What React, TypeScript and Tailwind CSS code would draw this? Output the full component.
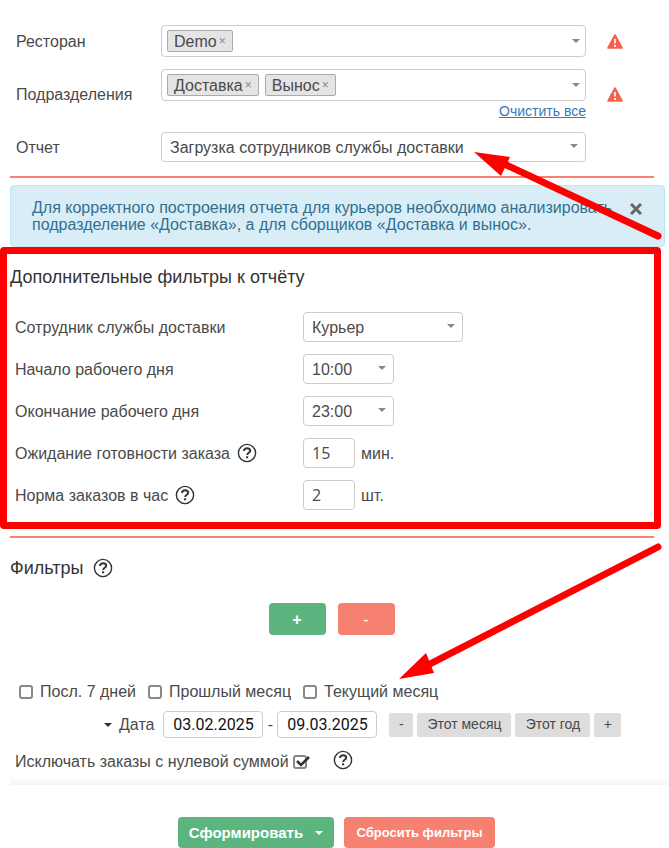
import type { ReactNode, SelectHTMLAttributes } from 'react'

const control = 'rounded-[4px] border border-[#ccc] bg-white'

function Caret({ className = '' }: { className?: string }) {
  return (
    <svg viewBox="0 0 8 4" className={`pointer-events-none h-1 w-2 shrink-0 fill-current ${className}`} aria-hidden="true">
      <path d="M0 0h8L4 4z" />
    </svg>
  )
}

function Help({ label }: { label: string }) {
  return (
    <button type="button" aria-label={label} className="text-[#333]">
      <svg viewBox="0 0 20 20" className="block size-5" fill="none" stroke="currentColor">
        <circle cx="10" cy="10" r="8.6" strokeWidth="1.4" />
        <path d="M7 8.1c0-1.9 1.3-2.9 3.1-2.9s3.1 1 3.1 2.5c0 2.1-3 2-3 4.2" strokeWidth="2" />
        <path d="M10.1 13.3v2" strokeWidth="2.1" />
      </svg>
    </button>
  )
}

function Warning() {
  return (
    <svg viewBox="0 0 16 15" className="block h-[15px] w-4" role="img" aria-label="Внимание">
      <path d="M8 1 15 14H1z" fill="#fb5f4b" stroke="#fb5f4b" strokeWidth="1.6" strokeLinejoin="round" />
      <path d="M8 5v4.6M8 11v2" stroke="#fff" strokeWidth="1.8" />
    </svg>
  )
}

function Select({ className = '', children, ...props }: SelectHTMLAttributes<HTMLSelectElement>) {
  return (
    <div className={`relative ${className}`}>
      <select {...props} className={`${control} block h-[30px] w-full appearance-none pr-6 pl-2`}>
        {children}
      </select>
      <Caret className="absolute top-3 right-2 text-[#888]" />
    </div>
  )
}

function TagBox({ id, tags }: { id: string; tags: string[] }) {
  return (
    <div className={`${control} flex h-8 items-center gap-1.5 px-[5px]`}>
      {tags.map(tag => (
        <span key={tag} className="flex h-[22px] shrink-0 items-center gap-0.5 rounded-[2px] border border-[#aaa] bg-[#e4e4e4] px-1.5">
          {tag}
          <button type="button" aria-label={`Удалить ${tag}`} className="text-xs text-[#888]">×</button>
        </span>
      ))}
      <input id={id} className="min-w-0 flex-1 outline-none" />
      <Caret className="text-[#888]" />
    </div>
  )
}

function Row({ id, label, help, children }: { id: string; label: string; help?: boolean; children: ReactNode }) {
  return (
    <div className="flex h-[30px] items-center">
      <div className="flex w-[288px] shrink-0 items-center gap-[7px]">
        <label htmlFor={id}>{label}</label>
        {help && <Help label={`Справка: ${label}`} />}
      </div>
      {children}
    </div>
  )
}

const periods = ['Посл. 7 дней', 'Прошлый месяц', 'Текущий месяц']
const checkbox = 'size-[14px] shrink-0 appearance-none rounded-[3px] border-2 border-[#888] bg-white'
const numberInput = "mr-1.5 h-[30px] w-[52px] px-2 font-['Open_Sans',sans-serif]"
const dateInput = "h-[27px] w-[100px] text-center font-['Roboto',sans-serif] text-[#111]"
const smallButton = 'h-6 rounded-[2px] bg-[#ddd] text-[14px]'

export default function App() {
  return (
    <main className="relative overflow-hidden bg-white font-['Liberation_Sans',Arial,sans-serif] text-[16px] leading-[17px] text-[#4a4a4a]">
      <form onSubmit={e => e.preventDefault()}>
        <section className="flex flex-col gap-3 pt-[25px] pr-[10px] pl-4">
          <div className="flex items-center">
            <label htmlFor="restaurant" className="w-[145px] shrink-0">Ресторан</label>
            <div className="min-w-0 flex-1"><TagBox id="restaurant" tags={['Demo']} /></div>
            <div className="flex w-[73px] shrink-0 pl-[21px]"><Warning /></div>
          </div>
          <div className="flex items-center">
            <label htmlFor="departments" className="w-[145px] shrink-0">Подразделения</label>
            <div className="flex min-w-0 flex-1 flex-col">
              <TagBox id="departments" tags={['Доставка', 'Вынос']} />
              <a href="#" className="mt-0.5 self-end text-[14px] text-[#337ab7] underline">Очистить все</a>
            </div>
            <div className="flex w-[73px] shrink-0 pl-[21px]"><Warning /></div>
          </div>
          <div className="flex items-center">
            <label htmlFor="report" className="w-[145px] shrink-0">Отчет</label>
            <Select id="report" className="min-w-0 flex-1">
              <option>Загрузка сотрудников службы доставки</option>
            </Select>
            <div className="w-[73px] shrink-0" />
          </div>
        </section>

        <hr className="mt-[14px] mr-[15px] ml-[10px] border-t-2 border-[#f68171]" />

        <div role="alert" className="mt-[7px] mr-1 ml-[10px] flex items-start rounded-[4px] border border-[#bce8f1] bg-[#d9edf7] py-[13px] pr-[22px] pl-[21px] text-[#31708f]">
          <p className="flex-1">
            Для корректного построения отчета для курьеров необходимо анализировать подразделение «Доставка», а для сборщиков «Доставка и вынос».
          </p>
          <button type="button" aria-label="Закрыть" className="mt-1 text-[#666]">
            <svg viewBox="0 0 12 12" className="block size-3" stroke="currentColor" strokeWidth="3">
              <path d="m1 1 10 10M11 1 1 11" />
            </svg>
          </button>
        </div>

        <section className="mr-2 rounded-[4px] border-[7px] border-[#f00] pt-[11px] pb-3">
          <h2 className="pl-[3px] text-lg leading-6 text-[#333]">Дополнительные фильтры к отчёту</h2>
          <div className="mt-[23px] flex flex-col gap-3 pl-2">
            <Row id="employee" label="Сотрудник службы доставки">
              <Select id="employee" className="w-40"><option>Курьер</option></Select>
            </Row>
            <Row id="day-start" label="Начало рабочего дня">
              <Select id="day-start" className="w-[91px]"><option>10:00</option></Select>
            </Row>
            <Row id="day-end" label="Окончание рабочего дня">
              <Select id="day-end" className="w-[91px]"><option>23:00</option></Select>
            </Row>
            <Row id="waiting" label="Ожидание готовности заказа" help>
              <input id="waiting" defaultValue="15" className={`${control} ${numberInput}`} />
              мин.
            </Row>
            <Row id="norm" label="Норма заказов в час" help>
              <input id="norm" defaultValue="2" className={`${control} ${numberInput}`} />
              шт.
            </Row>
          </div>
        </section>

        <hr className="mt-[7px] mr-[15px] ml-[10px] border-t-2 border-[#f68171]" />

        <section className="pt-[18px]">
          <div className="flex items-center gap-2.5 pl-[10px]">
            <h2 className="text-lg leading-6 text-[#333]">Фильтры</h2>
            <Help label="Справка: Фильтры" />
          </div>
          <div className="mt-[23px] flex justify-center gap-3 pr-1.5">
            <button type="button" aria-label="Добавить фильтр" className="h-8 w-[57px] rounded-[4px] bg-[#5cb57f] font-bold text-white">+</button>
            <button type="button" aria-label="Удалить фильтр" className="h-8 w-[57px] rounded-[4px] bg-[#f68171] text-white">-</button>
          </div>
        </section>

        <section className="pt-12">
          <div className="flex items-center gap-3 pl-[19px]">
            {periods.map(period => (
              <label key={period} className="flex items-center gap-[7px]">
                <input type="checkbox" className={checkbox} />
                {period}
              </label>
            ))}
          </div>
          <div className="mt-[11px] flex items-center pl-[104px]">
            <button type="button" className="flex items-center gap-[7px]">
              <Caret className="text-[#333]" />
              Дата
            </button>
            <input aria-label="Дата с" defaultValue="03.02.2025" className={`${control} ${dateInput} ml-[9px]`} />
            <span className="w-[14px] text-center">-</span>
            <input aria-label="Дата по" defaultValue="09.03.2025" className={`${control} ${dateInput}`} />
            <div className="ml-3 flex gap-1">
              <button type="button" aria-label="Предыдущий период" className={`${smallButton} w-6`}>-</button>
              <button type="button" className={`${smallButton} w-[94px]`}>Этот месяц</button>
              <button type="button" className={`${smallButton} w-[75px]`}>Этот год</button>
              <button type="button" aria-label="Следующий период" className={`${smallButton} w-[27px]`}>+</button>
            </div>
          </div>
          <div className="mt-3 flex items-center pl-[15px]">
            <label className="flex items-center gap-1">
              Исключать заказы с нулевой суммой
              <span className="relative flex">
                <input type="checkbox" defaultChecked className={`peer ${checkbox}`} />
                <svg viewBox="0 0 16 14" className="pointer-events-none absolute top-0 left-0.5 hidden h-[14px] w-4 peer-checked:block" fill="none" stroke="#333" strokeWidth="2.6" aria-hidden="true">
                  <path d="m2 6 4 4 8-8" />
                </svg>
              </span>
            </label>
            <span className="ml-[26px]"><Help label="Справка: Исключать заказы" /></span>
          </div>
        </section>

        <div className="mt-1 ml-[10px] h-2 bg-linear-to-b from-white to-[#f5f5f5]" />

        <footer className="flex justify-center gap-[10px] pt-8 pl-1">
          <button type="submit" className="flex h-[31px] w-[156px] items-center justify-center gap-3 rounded-[4px] bg-[#5cb57f] text-[15px] font-bold text-white">
            Сформировать
            <Caret />
          </button>
          <button type="reset" className="h-[31px] w-[151px] rounded-[4px] bg-[#f68171] text-[13px] font-bold text-white">Сбросить фильтры</button>
        </footer>
      </form>

      <svg viewBox="0 0 669 848" className="pointer-events-none absolute top-0 left-0 w-full" fill="#f00" stroke="#f00" aria-hidden="true">
        <path d="M500 162 658 236M426 666 658 547" strokeWidth="7" strokeLinecap="round" />
        <path d="M474 152 510 157 501 176zM399 679 426 653 434 673z" stroke="none" />
      </svg>
    </main>
  )
}
